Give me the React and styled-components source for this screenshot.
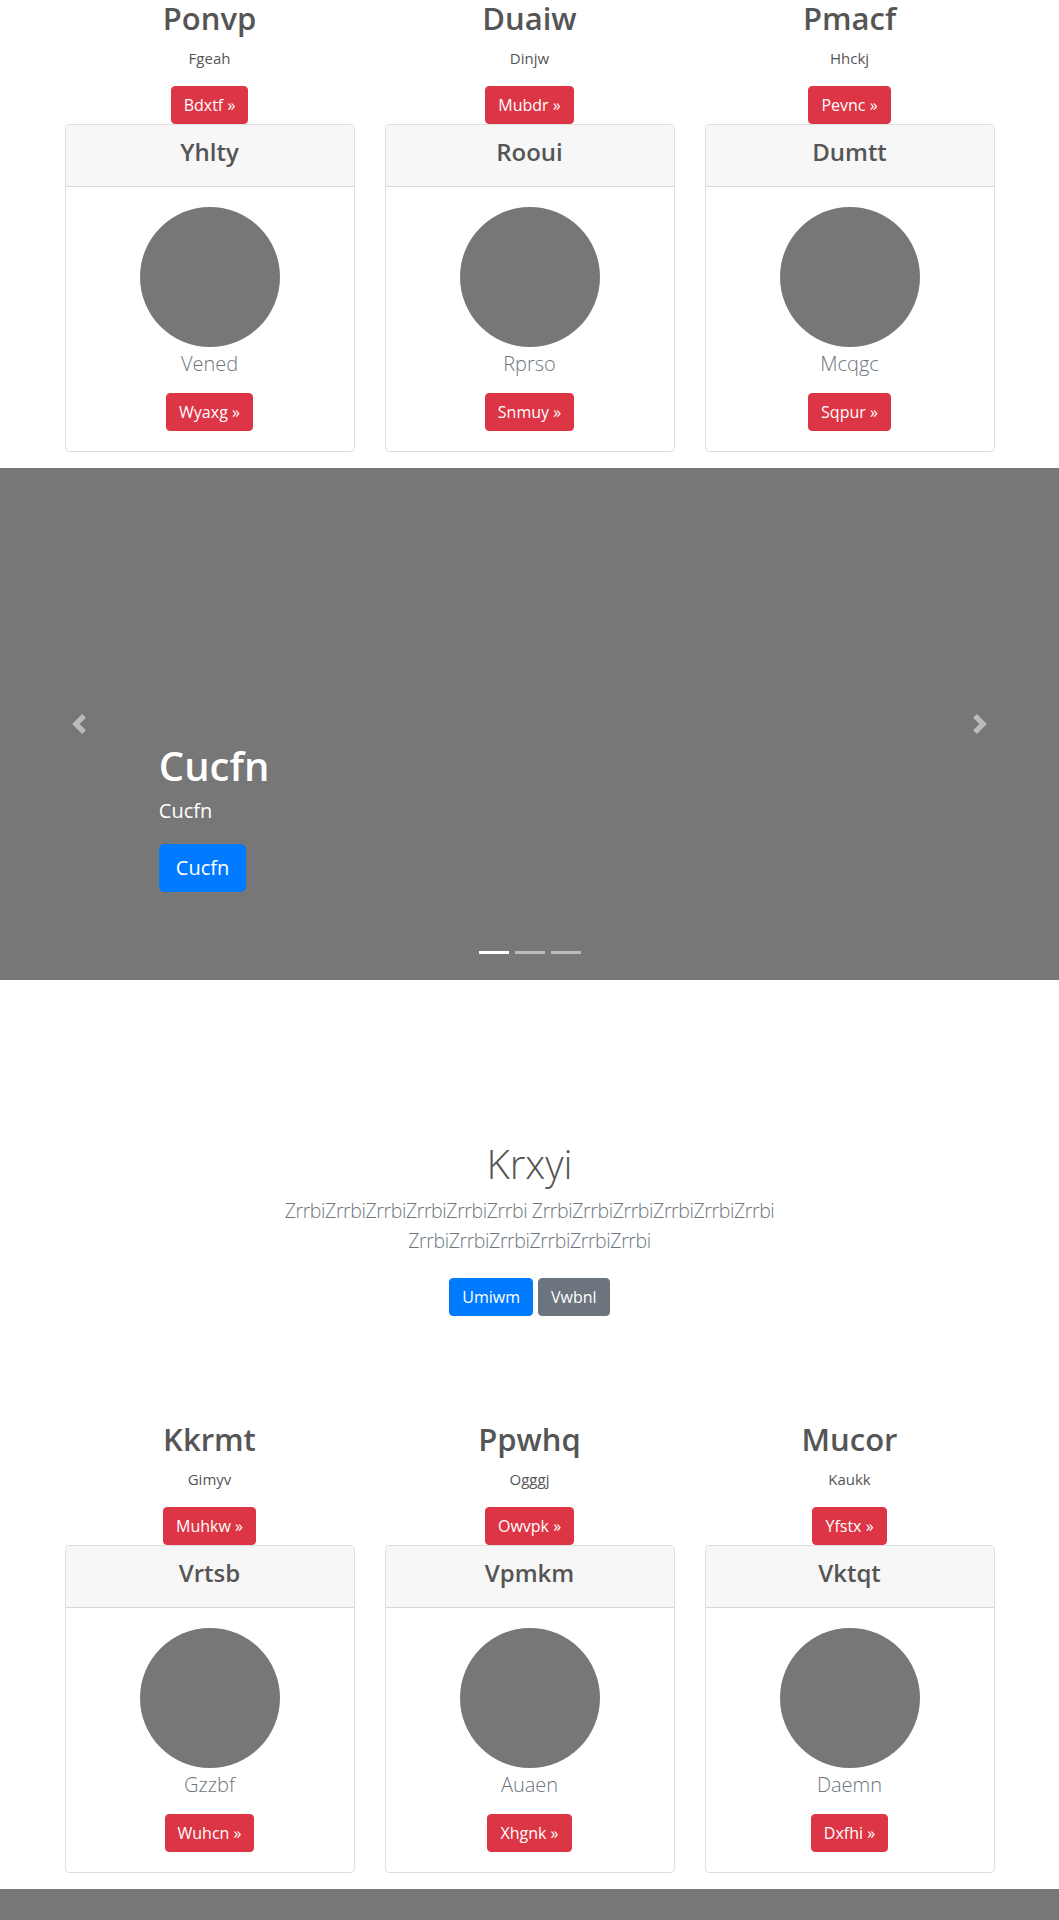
import React from "react";
import styled, { createGlobalStyle } from "styled-components";

const GlobalStyle = createGlobalStyle`
  * { box-sizing: border-box; }
  body {
    margin: 0;
    background: #fff;
    color: #555;
    font-family: "Open Sans", "Noto Sans", sans-serif;
  }
`;

const topFeatures = [
  { title: "Ponvp", sub: "Fgeah", cta: "Bdxtf", card: "Yhlty", name: "Vened", btn: "Wyaxg" },
  { title: "Duaiw", sub: "Dinjw", cta: "Mubdr", card: "Rooui", name: "Rprso", btn: "Snmuy" },
  { title: "Pmacf", sub: "Hhckj", cta: "Pevnc", card: "Dumtt", name: "Mcqgc", btn: "Sqpur" },
];

const bottomFeatures = [
  { title: "Kkrmt", sub: "Gimyv", cta: "Muhkw", card: "Vrtsb", name: "Gzzbf", btn: "Wuhcn" },
  { title: "Ppwhq", sub: "Ogggj", cta: "Owvpk", card: "Vpmkm", name: "Auaen", btn: "Xhgnk" },
  { title: "Mucor", sub: "Kaukk", cta: "Yfstx", card: "Vktqt", name: "Daemn", btn: "Dxfhi" },
];

const btnColors = {
  danger: "#dc3545",
  primary: "#007bff",
  secondary: "#6c757d",
};

const Button = styled.a`
  display: inline-block;
  padding: ${(p) => (p.$large ? "8px 16px" : "6px 12px")};
  font-size: ${(p) => (p.$large ? "20px" : "16px")};
  line-height: ${(p) => (p.$large ? "30px" : "24px")};
  border-radius: ${(p) => (p.$large ? "5px" : "4px")};
  border: 1px solid ${(p) => btnColors[p.$variant]};
  background: ${(p) => btnColors[p.$variant]};
  color: #fff;
  text-decoration: none;
  white-space: nowrap;
`;

/* ---------- features ---------- */

const Features = styled.section`
  width: 930px;
  margin: 0 auto;
  padding-bottom: 16px;
  display: grid;
  grid-template-columns: repeat(3, 1fr);
  column-gap: 30px;
`;

const Column = styled.div`
  display: flex;
  flex-direction: column;
  align-items: center;
  text-align: center;
`;

const Title = styled.h2`
  margin: -3px 0 6px;
  font-size: 31px;
  font-weight: 600;
  line-height: 43px;
  color: #555;
`;

const Sub = styled.p`
  margin: 0 0 16px;
  font-size: 15px;
  line-height: 24px;
`;

const Card = styled.div`
  width: 100%;
  border: 1px solid rgba(0, 0, 0, 0.125);
  border-radius: 4px;
`;

const CardHeader = styled.div`
  background: #f7f7f7;
  border-bottom: 1px solid rgba(0, 0, 0, 0.125);
  border-radius: 3px 3px 0 0;
  padding: 12px 20px;
`;

const CardTitle = styled.h4`
  margin: 0 0 8px;
  font-size: 24px;
  font-weight: 600;
  line-height: 29px;
  color: #555;
`;

const CardBody = styled.div`
  padding: 20px;
  display: flex;
  flex-direction: column;
  align-items: center;
`;

const Avatar = styled.div`
  width: 140px;
  height: 140px;
  border-radius: 50%;
  background: #777;
`;

const Name = styled.p`
  margin: 2px 0 14px;
  font-size: 20px;
  font-weight: 300;
  line-height: 30px;
  color: #6c757d;
`;

const FeatureRow = ({ items }) => (
  <Features>
    {items.map((f) => (
      <Column key={f.title}>
        <Title>{f.title}</Title>
        <Sub>{f.sub}</Sub>
        <Button $variant="danger" href="#">{f.cta} &raquo;</Button>
        <Card>
          <CardHeader>
            <CardTitle>{f.card}</CardTitle>
          </CardHeader>
          <CardBody>
            <Avatar />
            <Name>{f.name}</Name>
            <Button $variant="danger" href="#">{f.btn} &raquo;</Button>
          </CardBody>
        </Card>
      </Column>
    ))}
  </Features>
);

/* ---------- carousel ---------- */

const Carousel = styled.section`
  position: relative;
  height: 512px;
  background: #777;
  display: flex;
  flex-direction: column;
  justify-content: flex-end;
  align-items: flex-start;
  padding: 0 15% 88px;
  color: #fff;
`;

const CaptionTitle = styled.h1`
  margin: 0 0 6px;
  font-size: 40px;
  font-weight: 600;
  line-height: 48px;
`;

const CaptionText = styled.p`
  margin: 0 0 18px;
  font-size: 20px;
  line-height: 30px;
`;

const Control = styled.a`
  position: absolute;
  top: 0;
  bottom: 0;
  ${(p) => (p.$side === "prev" ? "left: 0;" : "right: 0;")}
  width: 15%;
  display: flex;
  align-items: center;
  justify-content: center;
  opacity: 0.5;
`;

const Indicators = styled.ol`
  position: absolute;
  left: 0;
  right: 0;
  bottom: 26px;
  margin: 0;
  padding: 0;
  list-style: none;
  display: flex;
  justify-content: center;
`;

const Indicator = styled.li`
  width: 30px;
  height: 3px;
  margin: 0 3px;
  background: #fff;
  opacity: ${(p) => (p.$active ? 1 : 0.5)};
`;

const PrevIcon = () => (
  <svg width="20" height="20" viewBox="0 0 8 8" fill="#fff">
    <path d="M5.25 0l-4 4 4 4 1.5-1.5L4.25 4l2.5-2.5L5.25 0z" />
  </svg>
);

const NextIcon = () => (
  <svg width="20" height="20" viewBox="0 0 8 8" fill="#fff">
    <path d="M2.75 0l-1.5 1.5L3.75 4l-2.5 2.5L2.75 8l4-4-4-4z" />
  </svg>
);

const HeroCarousel = ({ label }) => (
  <Carousel>
    <Control $side="prev" href="#"><PrevIcon /></Control>
    <Control $side="next" href="#"><NextIcon /></Control>
    <CaptionTitle>{label}</CaptionTitle>
    <CaptionText>{label}</CaptionText>
    <Button $variant="primary" $large href="#">{label}</Button>
    <Indicators>
      <Indicator $active />
      <Indicator />
      <Indicator />
    </Indicators>
  </Carousel>
);

/* ---------- jumbotron ---------- */

const Jumbotron = styled.section`
  padding: 160px 0 97px;
  text-align: center;
`;

const JumboInner = styled.div`
  max-width: 610px;
  margin: 0 auto;
`;

const JumboTitle = styled.h1`
  margin: 0 0 8px;
  font-size: 40px;
  font-weight: 300;
  line-height: 48px;
  color: #555;
`;

const Lead = styled.p`
  margin: 0 0 22px;
  font-size: 19.5px;
  font-weight: 300;
  line-height: 30px;
  letter-spacing: -0.4px;
  color: #6c757d;
`;

const Actions = styled.div`
  display: flex;
  justify-content: center;
  gap: 5px;
  margin-bottom: 8px;
`;

const word = "ZrrbiZrrbiZrrbiZrrbiZrrbiZrrbi";

export default function App() {
  return (
    <>
      <GlobalStyle />
      <FeatureRow items={topFeatures} />
      <HeroCarousel label="Cucfn" />
      <Jumbotron>
        <JumboInner>
          <JumboTitle>Krxyi</JumboTitle>
          <Lead>{`${word} ${word} ${word}`}</Lead>
          <Actions>
            <Button $variant="primary" href="#">Umiwm</Button>
            <Button $variant="secondary" href="#">Vwbnl</Button>
          </Actions>
        </JumboInner>
      </Jumbotron>
      <FeatureRow items={bottomFeatures} />
      <HeroCarousel label="Cucfn" />
    </>
  );
}
